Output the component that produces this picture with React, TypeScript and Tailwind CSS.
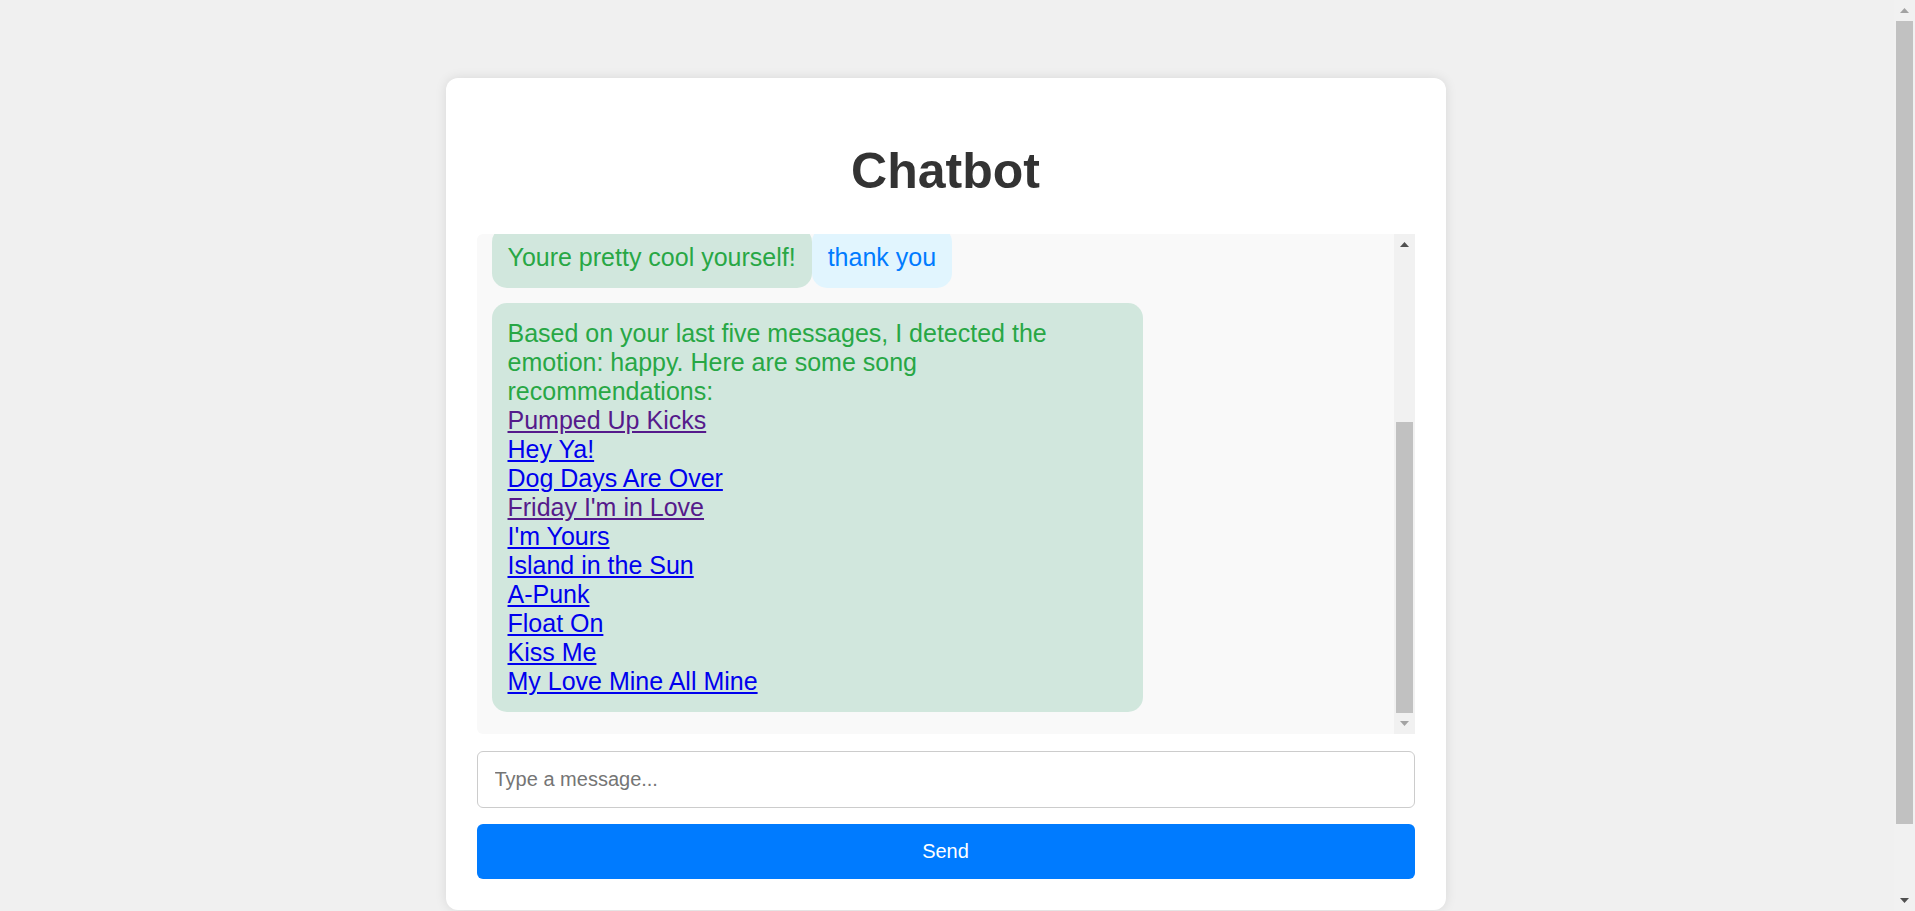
import { useLayoutEffect, useRef } from "react";

type Msg = { from: "bot" | "user"; text: string };

// earlier conversation, scrolled out of view above
const history: Msg[] = [
  { from: "bot", text: "Hi! I'm here to chat. How are you feeling today?" },
  { from: "user", text: "hey" },
  { from: "user", text: "i'm doing great today" },
  { from: "bot", text: "That's wonderful to hear!" },
  { from: "user", text: "the weather is so nice" },
  { from: "bot", text: "Sunny days are the best." },
  { from: "user", text: "honestly you're such a cool chatbot, I like talking to you" },
  { from: "bot", text: "Youre pretty cool yourself!" },
  { from: "user", text: "thank you" },
];

const songs = [
  { title: "Pumped Up Kicks", visited: true },
  { title: "Hey Ya!", visited: false },
  { title: "Dog Days Are Over", visited: false },
  { title: "Friday I'm in Love", visited: true },
  { title: "I'm Yours", visited: false },
  { title: "Island in the Sun", visited: false },
  { title: "A-Punk", visited: false },
  { title: "Float On", visited: false },
  { title: "Kiss Me", visited: false },
  { title: "My Love Mine All Mine", visited: false },
];

function Arrow({ dir, dark }: { dir: "up" | "down"; dark: boolean }) {
  return (
    <svg width="9" height="5" viewBox="0 0 9 5" className={dark ? "fill-[#505050]" : "fill-[#a3a3a3]"}>
      {dir === "up" ? <path d="M4.5 0 9 5H0z" /> : <path d="M0 0h9L4.5 5z" />}
    </svg>
  );
}

function Bubble({ from, children }: { from: "bot" | "user"; children: React.ReactNode }) {
  return (
    <div
      className={
        from === "bot"
          ? "max-w-[651px] rounded-[15px] bg-[#d1e7dd] p-[16px] text-[25px] leading-[29px] text-[#28a745]"
          : "max-w-[651px] rounded-[15px] bg-[#e1f5fe] p-[16px] text-[25px] leading-[29px] text-[#007bff]"
      }
    >
      {children}
    </div>
  );
}

export default function App() {
  const boxRef = useRef<HTMLDivElement>(null);

  useLayoutEffect(() => {
    const el = boxRef.current;
    if (el) el.scrollTop = el.scrollHeight;
  }, []);

  return (
    <div className="flex h-screen bg-[#f0f0f0] font-['Liberation_Sans',Arial,sans-serif]">
      <main className="flex-1 overflow-y-auto py-[78px] pr-[3px] [scrollbar-width:none]">
        <div className="mx-auto w-[1000px] rounded-[12px] bg-white p-[31px] shadow-[0_0_12px_rgba(0,0,0,0.1)]">
          <h1 className="my-[33.5px] text-center text-[50px] font-bold leading-[57.5px] text-[#333]">
            Chatbot
          </h1>

          {/* messages */}
          <div className="flex h-[500px] rounded-[6px] bg-[#f9f9f9]">
            <div ref={boxRef} className="flex-1 overflow-y-auto [scrollbar-width:none]">
              <div className="flex flex-wrap items-start gap-y-[15px] px-[15px] pt-[15px] pb-[22px]">
                {history.map((m, i) => (
                  <Bubble key={i} from={m.from}>
                    {m.text}
                  </Bubble>
                ))}
                <Bubble from="bot">
                  Based on your last five messages, I detected the emotion: happy. Here are some song
                  recommendations:
                  {songs.map((s) => (
                    <div key={s.title}>
                      <a
                        href="#"
                        className={s.visited ? "text-[#551a8b] underline" : "text-[#0000ee] underline"}
                      >
                        {s.title}
                      </a>
                    </div>
                  ))}
                </Bubble>
              </div>
            </div>
            {/* scrollbar of the message list */}
            <div className="flex w-[21px] flex-col bg-[#f1f1f1]">
              <div className="flex h-[21px] items-center justify-center">
                <Arrow dir="up" dark />
              </div>
              <div className="flex flex-1 flex-col justify-end px-[2px]">
                <div className="h-[291px] bg-[#c1c1c1]" />
              </div>
              <div className="flex h-[21px] items-center justify-center">
                <Arrow dir="down" dark={false} />
              </div>
            </div>
          </div>

          <input
            type="text"
            placeholder="Type a message..."
            className="mt-[17px] block h-[57px] w-full rounded-[6px] border border-[#ccc] bg-white px-[17px] text-[20px] outline-none placeholder:text-[#757575]"
          />
          <button className="mt-[16px] block h-[55px] w-full rounded-[6px] bg-[#007bff] text-[20px] text-white">
            Send
          </button>
        </div>
      </main>

      {/* page scrollbar */}
      <div className="flex w-[21px] flex-col bg-[#f1f1f1]">
        <div className="flex h-[21px] items-center justify-center">
          <Arrow dir="up" dark={false} />
        </div>
        <div className="flex flex-1 flex-col px-[2px]">
          <div className="h-[803px] bg-[#c1c1c1]" />
        </div>
        <div className="flex h-[21px] items-center justify-center">
          <Arrow dir="down" dark />
        </div>
      </div>
    </div>
  );
}
